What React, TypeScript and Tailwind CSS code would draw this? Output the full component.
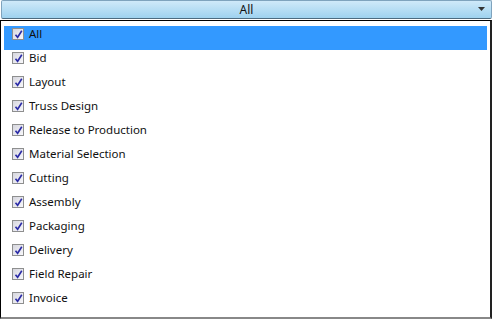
import React from 'react'

const items = [
  'All',
  'Bid',
  'Layout',
  'Truss Design',
  'Release to Production',
  'Material Selection',
  'Cutting',
  'Assembly',
  'Packaging',
  'Delivery',
  'Field Repair',
  'Invoice',
]

function CheckBox() {
  return (
    <div className="w-[12px] h-[12px] border border-[#8e8f8f] bg-gradient-to-br from-[#d6d6de] to-[#f8f8fb] flex items-center justify-center shrink-0">
      <svg width="9" height="9" viewBox="0 0 9 9">
        <path d="M1.5 4.8 L3.6 7.3 L7.8 0.8" fill="none" stroke="#2b2ba6" strokeWidth="1.6" />
      </svg>
    </div>
  )
}

export default function App() {
  return (
    <div className="w-[493px] h-[320px] bg-white relative" style={{ fontFamily: '"Noto Sans", sans-serif' }}>
      {/* combo header */}
      <div className="h-[19px] mx-[1px] rounded-[2px] border border-[#7fa3bd] border-b-[#4d6b80] bg-gradient-to-b from-[#cfe9f9] to-[#9ed2ef] flex items-center relative">
        <div className="flex-1 text-center text-[12px] leading-none text-[#111]">All</div>
        <svg className="absolute right-[6px] top-[6px]" width="7" height="4" viewBox="0 0 7 4">
          <path d="M0 0 H7 L3.5 4 Z" fill="#333" />
        </svg>
      </div>
      {/* dropdown panel */}
      <div className="mt-[1px] h-[299px] w-[492px] border-l border-t border-black border-r-2 border-r-[#222] border-b-2 border-b-[#888] pt-[5px] px-[3px]">
        {items.map((it, i) => (
          <div
            key={it}
            className={`h-[24px] flex items-start gap-[5px] pl-[8px] pt-[2px] ${i === 0 ? 'bg-[#3399ff]' : ''}`}
          >
            <CheckBox />
            <span className="text-[11.5px] leading-[12px] text-[#111]">{it}</span>
          </div>
        ))}
      </div>
    </div>
  )
}
